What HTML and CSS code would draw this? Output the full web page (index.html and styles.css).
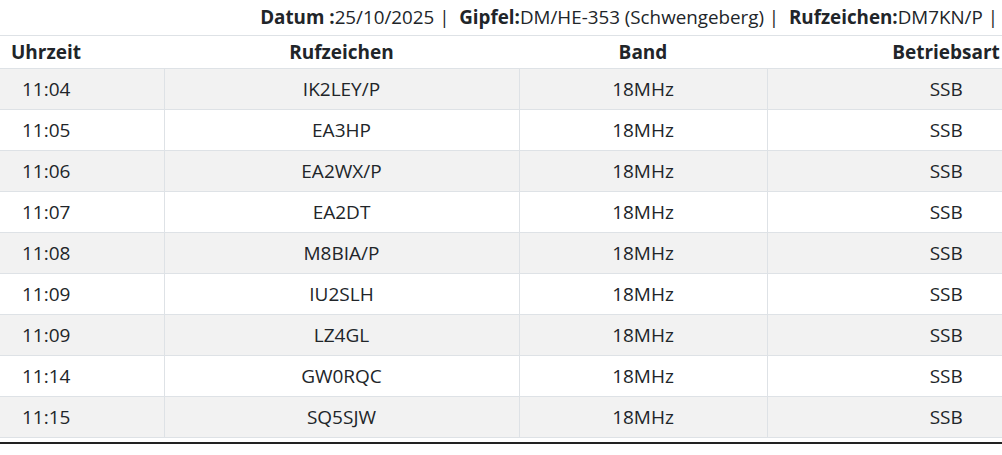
FILE: index.html
```html
<!DOCTYPE html>
<html lang="de">
<head>
<meta charset="utf-8">
<link rel="stylesheet" href="styles.css">
</head>
<body>
<div class="info"><b>Datum :</b>25/10/2025 |&nbsp; <b>Gipfel:</b>DM/HE-353 (Schwengeberg) |&nbsp; <b>Rufzeichen:</b>DM7KN/P |</div>
<table class="log">
<thead>
<tr><th class="c1">Uhrzeit</th><th class="c2">Rufzeichen</th><th class="c3">Band</th><th class="c4">Betriebsart</th></tr>
</thead>
<tbody>
<tr><td class="c1">11:04</td><td class="c2">IK2LEY/P</td><td class="c3">18MHz</td><td class="c4">SSB</td></tr>
<tr><td class="c1">11:05</td><td class="c2">EA3HP</td><td class="c3">18MHz</td><td class="c4">SSB</td></tr>
<tr><td class="c1">11:06</td><td class="c2">EA2WX/P</td><td class="c3">18MHz</td><td class="c4">SSB</td></tr>
<tr><td class="c1">11:07</td><td class="c2">EA2DT</td><td class="c3">18MHz</td><td class="c4">SSB</td></tr>
<tr><td class="c1">11:08</td><td class="c2">M8BIA/P</td><td class="c3">18MHz</td><td class="c4">SSB</td></tr>
<tr><td class="c1">11:09</td><td class="c2">IU2SLH</td><td class="c3">18MHz</td><td class="c4">SSB</td></tr>
<tr><td class="c1">11:09</td><td class="c2">LZ4GL</td><td class="c3">18MHz</td><td class="c4">SSB</td></tr>
<tr><td class="c1">11:14</td><td class="c2">GW0RQC</td><td class="c3">18MHz</td><td class="c4">SSB</td></tr>
<tr><td class="c1">11:15</td><td class="c2">SQ5SJW</td><td class="c3">18MHz</td><td class="c4">SSB</td></tr>
</tbody>
</table>
<div class="rule"></div>
</body>
</html>
```
FILE: styles.css
```css
html, body {
  margin: 0;
  padding: 0;
  overflow: hidden;
  background: #fff;
}
body {
  font-family: "Open Sans", "Noto Sans", sans-serif;
  color: #212529;
  width: 1125px;
}
.info {
  width: 1002px;
  box-sizing: border-box;
  text-align: right;
  font-size: 18.8px;
  line-height: 35px;
  height: 35px;
  white-space: nowrap;
  padding-right: 4px;
}
.info b {
  font-weight: 700;
}
.log {
  width: 1125px;
  border-collapse: collapse;
  table-layout: fixed;
  font-size: 19px;
}
.log th,
.log td {
  box-sizing: border-box;
  padding: 0;
  text-align: center;
  vertical-align: middle;
}
.log th {
  height: 33px;
  font-weight: 700;
  border-top: 1px solid #dee2e6;
  border-bottom: 1px solid #dee2e6;
}
.log th.c1 {
  text-align: left;
  padding-left: 11px;
}
.log td {
  height: 41px;
  border-bottom: 1px solid #dee2e6;
  border-left: 1px solid #dee2e6;
}
.log td.c1 {
  text-align: left;
  padding-left: 22px;
  border-left: none;
}
.log tbody tr:nth-child(odd) td {
  background: #f2f2f2;
}
.c1 { width: 164px; }
.c2 { width: 355px; }
.c3 { width: 248px; }
.rule {
  margin-top: 4px;
  width: 1002px;
  height: 2px;
  background: #222;
}
```
